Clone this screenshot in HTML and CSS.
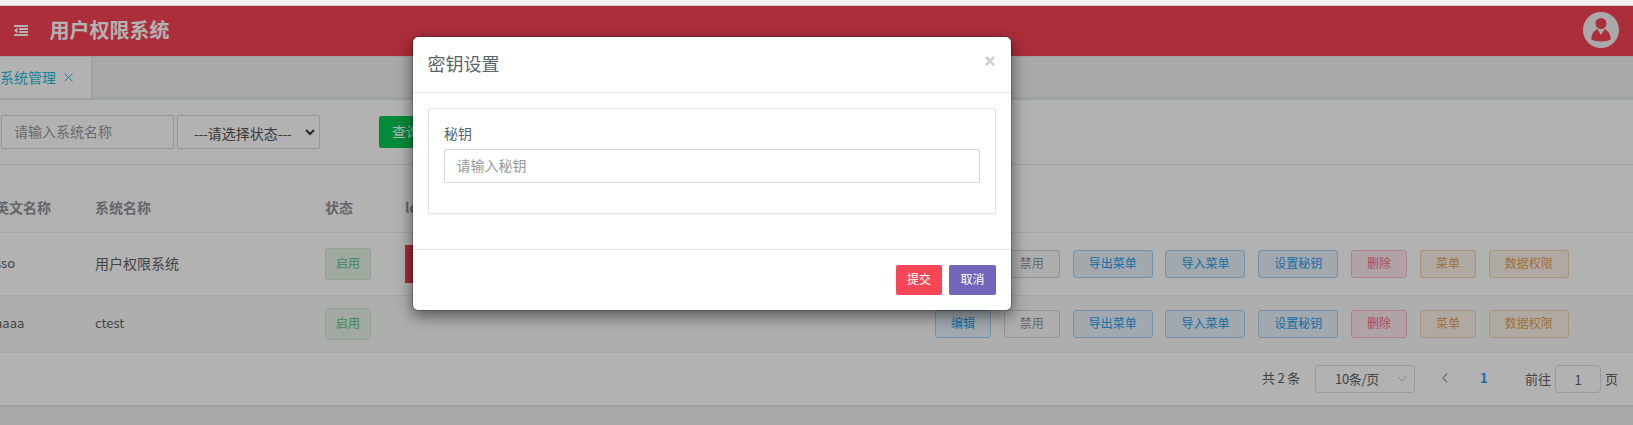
FILE: index.html
```html
<!DOCTYPE html>
<html lang="zh-CN">
<head>
<meta charset="utf-8">
<title>用户权限系统</title>
<link rel="stylesheet" href="styles.css">
</head>
<body>
<div class="chrome-strip"></div>
<div class="app">
  <header class="topbar">
    <svg class="menu-icon" width="14" height="12" viewBox="0 0 14 12"><path d="M0 0h14v2H0zM5 3h9v2H5zM5 6h9v2H5zM0 9h14v2H0zM3.500 2.600v5.800L0 5.500z"/></svg>
    <h1 class="brand">用户权限系统</h1>
    <svg class="avatar" width="36" height="36" viewBox="0 0 36 36"><circle class="disc" cx="18" cy="18" r="18"/><circle cx="18" cy="11.500" r="5.500"/><path d="M8.300 27.500C8.300 23 10.500 18.500 14.500 17L18 23l3.500-6c4 1.500 6.200 6 6.200 10.500C24 30 12 30 8.300 27.500z"/></svg>
  </header>
  <nav class="tabs">
    <div class="tab"><span>系统管理</span><svg width="9" height="9" viewBox="0 0 9 9"><path d="M.5.5l8 8M8.500.5l-8 8"/></svg></div>
  </nav>
  <section class="search">
    <div class="field name-field">请输入系统名称</div>
    <div class="field state-field"><span><i>---</i>请选择状态<i>---</i></span><svg width="10" height="7" viewBox="0 0 10 7"><path d="M1 1l4 4 4-4"/></svg></div>
    <div class="query">查询</div>
  </section>
  <section class="table">
    <div class="row head"><div class="clip">英文名称</div><div>系统名称</div><div>状态</div><div>logo</div><div></div></div>
    <div class="row first">
      <div class="clip latin">sso</div><div>用户权限系统</div><div><span class="tag">启用</span></div><div><span class="logo"></span></div>
      <div class="actions"><span class="btn blue">编辑</span><span class="btn gray">禁用</span><span class="btn blue">导出菜单</span><span class="btn blue">导入菜单</span><span class="btn blue">设置秘钥</span><span class="btn red">删除</span><span class="btn amber">菜单</span><span class="btn amber">数据权限</span></div>
    </div>
    <div class="row second">
      <div class="clip latin">aaaa</div><div class="latin">ctest</div><div><span class="tag">启用</span></div><div></div>
      <div class="actions"><span class="btn blue">编辑</span><span class="btn gray">禁用</span><span class="btn blue">导出菜单</span><span class="btn blue">导入菜单</span><span class="btn blue">设置秘钥</span><span class="btn red">删除</span><span class="btn amber">菜单</span><span class="btn amber">数据权限</span></div>
    </div>
  </section>
  <footer class="pager">
    <span class="total">共 2 条</span>
    <div class="size"><span>10条/页</span><svg width="10" height="6" viewBox="0 0 10 6"><path d="M.8.8L5 5 9.200.8"/></svg></div>
    <svg class="prev" width="6" height="10" viewBox="0 0 6 10"><path d="M5.300.5L.8 5l4.500 4.500"/></svg>
    <b class="current">1</b>
    <span class="goto">前往</span><div class="page">1</div><span class="goto">页</span>
  </footer>
</div>
<div class="backdrop"></div>
<div class="modal">
  <div class="modal-head"><h2>密钥设置</h2><svg width="10" height="10" viewBox="0 0 10 10"><path d="M1.700 1.700l6.600 6.600M8.300 1.700L1.700 8.300"/></svg></div>
  <div class="modal-body"><div class="panel"><label>秘钥</label><div class="secret">请输入秘钥</div></div></div>
  <div class="modal-foot"><span class="submit">提交</span><span class="cancel">取消</span></div>
</div>
</body>
</html>
```
FILE: styles.css
```css
* { box-sizing: border-box; }
body { margin: 0; width: 1633px; height: 425px; overflow: hidden; position: relative; background: #eff1f4; font: 14px/20px "Noto Sans CJK SC", sans-serif; color: #606266; }
svg { flex: none; display: block; }
h1, h2 { margin: 0; }
i { font-style: normal; letter-spacing: -.3px; }
.chrome-strip { height: 6px; background: #f2f1ef; border-bottom: 1px solid #d0cecb; }
.topbar { height: 50px; background: #f74353; display: flex; align-items: center; padding: 0 14px; }
.menu-icon { fill: #fff; margin-top: -1px; }
.brand { margin-left: 21.5px; font-size: 20px; line-height: 30px; font-weight: 700; color: #fff; position: relative; top: -1px; }
.avatar { margin: -2px 0 0 auto; fill: #f74353; }
.avatar .disc { fill: #f2f2f2; }
.tabs { height: 44px; border-bottom: 3px solid #dee7e9; border-top: 1px solid #e3e5e8; }
.tab { width: 92px; height: 41px; padding-bottom: 2px; background: #fff; border-right: 1px solid #dce2e4; display: flex; align-items: center; gap: 8px; color: #1dbddf; }
.tab svg { fill: none; stroke: #1dbddf; margin-top: 2px; }
.search { height: 65px; background: #fff; border-bottom: 1px solid #dee5e7; box-shadow: 0 1px 1px rgba(0,0,0,.05); display: flex; padding: 15px 0 0 1px; }
.field { height: 34px; border: 1px solid #cfdadd; border-radius: 2px; }
.name-field { width: 173px; padding: 5px 12px; color: #999; }
.state-field { width: 143px; margin-left: 3px; padding: 7px 4px 0 16px; color: #58666e; display: flex; justify-content: space-between; }
.state-field span { color: #555; white-space: nowrap; }
.state-field svg { margin-top: 6px; fill: none; stroke: #333; stroke-width: 2; }
.query { width: 58px; height: 32px; margin: 1px 0 0 59px; padding: 5px 13px; background: #00c853; color: #fff; border-radius: 2px; }
.table { background: #fff; }
.row { display: grid; grid-template-columns: 95px 230px 80px 530px 1fr; align-items: center; border-bottom: 1px solid #ebeef5; }
.row > div:not(.actions) { position: relative; }
.clip { margin-left: -5px; }
.latin { font-size: 13px; }
.head { height: 68px; padding-top: 16px; font-weight: 700; color: #909399; }
.first { height: 63px; }
.first > div:nth-child(-n+2), .second > div:nth-child(-n+2) { padding-bottom: 2px; }
.second { height: 57px; background: #fafafa; }
.tag { display: block; width: 46px; height: 32px; border: 1px solid #cfebcf; background: #e9f3e9; border-radius: 4px; color: #67c267; font-size: 12px; line-height: 27px; text-align: center; }
.logo { display: block; width: 90px; height: 38px; background: #ee3b4d; }
.actions { display: flex; gap: 12.8px; }
.btn { height: 28px; padding: 0 15px; border: 1px solid; border-radius: 3px; font-size: 12px; line-height: 23px; white-space: nowrap; flex: none; }
.blue { color: #20a0f0; background: #e8f2fa; border-color: #a3d3f8; }
.gray { color: #909399; background: #f9f9f9; border-color: #d3d4d6; }
.red { color: #f56c7c; background: #fbeaec; border-color: #fbb9c0; }
.amber { color: #e6a252; background: #fbf2e8; border-color: #f5d3ab; }
.pager { height: 53px; background: #fff; border-bottom: 1px solid #dee5e7; box-shadow: 0 1px 1px rgba(0,0,0,.05); display: flex; padding-top: 12px; font-size: 13px; line-height: 26px; }
.total { margin-left: 1262px; width: 53px; white-space: nowrap; letter-spacing: -.2px; }
.size { width: 100px; height: 28px; border: 1px solid #dcdfe6; border-radius: 3px; display: flex; padding: 0 7px 0 19px; justify-content: space-between; line-height: 25px; letter-spacing: -.3px; }
.size svg { margin-top: 10px; fill: none; stroke: #c0c4cc; }
.prev { margin: 8px 0 0 27px; fill: none; stroke: #a0a4aa; stroke-width: 1.3; }
.current { margin-left: 32px; width: 45px; color: #20a0f0; }
.goto { line-height: 28px; white-space: nowrap; }
.page { width: 46px; height: 28px; margin: 0 4px; border: 1px solid #dcdfe6; border-radius: 4px; text-align: center; line-height: 27px; }
.backdrop { position: absolute; inset: 6px 0 0; background: rgba(0,0,0,.3); }
.modal { position: absolute; left: 412px; top: 36px; width: 600px; height: 275px; background: #fff; background-clip: padding-box; border: 1px solid rgba(0,0,0,.2); border-radius: 6px; box-shadow: 0 5px 15px rgba(0,0,0,.5); color: #58666e; }
.modal-head { height: 56px; padding: 14px 16px 0 14.5px; border-bottom: 1px solid #e5e5e5; display: flex; justify-content: space-between; }
.modal-head h2 { font-size: 18px; line-height: 25px; font-weight: 400; }
.modal-head svg { margin-top: 5px; fill: none; stroke: #ccc; stroke-width: 2.6; stroke-linecap: round; }
.modal-body { height: 156px; padding: 15px; }
.panel { height: 106px; border: 1px solid #dee5e7; border-radius: 2px; box-shadow: 0 1px 1px rgba(0,0,0,.05); padding: 14px 15px; }
.panel label { display: block; height: 26px; }
.secret { height: 34px; border: 1px solid #cfdadd; border-radius: 2px; padding: 5px 11.5px; color: #999; }
.modal-foot { border-top: 1px solid #e5e5e5; padding: 15px; display: flex; justify-content: flex-end; gap: 7px; color: #fff; font-size: 12px; line-height: 28px; text-align: center; }
.submit, .cancel { width: 46px; height: 30px; background: #f94656; border-radius: 2px; }
.cancel { width: 47px; background: #7266ba; }
```
